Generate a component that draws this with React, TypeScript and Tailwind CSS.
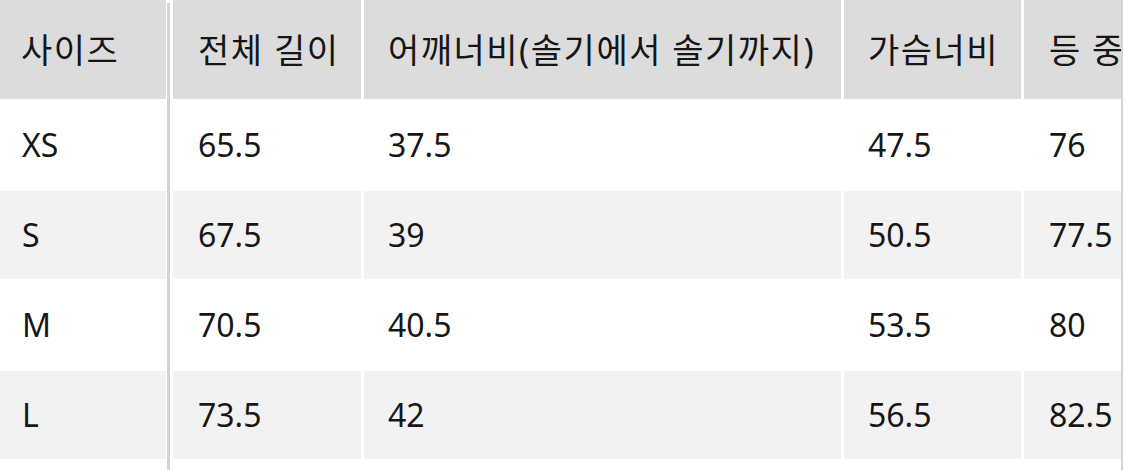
import React from 'react';

const headers = ['사이즈', '전체 길이', '어깨너비(솔기에서 솔기까지)', '가슴너비', '등 중심 소매길이'];

const rows = [
  ['XS', '65.5', '37.5', '47.5', '76'],
  ['S', '67.5', '39', '50.5', '77.5'],
  ['M', '70.5', '40.5', '53.5', '80'],
  ['L', '73.5', '42', '56.5', '82.5'],
];

// widths of the scrolling columns (the last one runs past the edge)
const colWidths = ['w-[188px]', 'w-[477px]', 'w-[177px]', 'w-[260px]'];
const colPads = ['pl-[25px]', 'pl-[24px]', 'pl-[24px]', 'pl-[25px]'];

const rowBg = (i: number) => (i % 2 === 0 ? 'bg-white' : 'bg-[#f2f2f2]');

export default function App() {
  return (
    <div
      className="w-[1125px] h-[470px] bg-white overflow-hidden text-[32px] text-[#161616] leading-none"
      style={{ fontFamily: '"Noto Sans", "Noto Sans CJK KR", sans-serif' }}
    >
      <div className="flex h-full">
        {/* Sticky size column */}
        <div className="w-[166px] shrink-0 flex flex-col gap-[2px]">
          <div className="h-[99px] bg-[#dcdcdc] flex items-center pl-[21px] text-[34px] tracking-[1.5px]">
            {headers[0]}
          </div>
          {rows.map((r, i) => (
            <div key={r[0]} className={`h-[88px] flex items-center pl-[22px] ${rowBg(i)}`}>
              {r[0]}
            </div>
          ))}
        </div>

        {/* divider line */}
        <div className="w-[3px] shrink-0 ml-px mt-[3px] bg-[#d4d4d4]" />

        {/* Scrolling columns */}
        <div className="ml-[3px] w-[948px] shrink-0 overflow-hidden flex flex-col gap-[2px]">
          <div className="flex gap-[3px] h-[99px] shrink-0">
            {headers.slice(1).map((h, c) => (
              <div
                key={h}
                className={`${colWidths[c]} ${colPads[c]} shrink-0 bg-[#dcdcdc] flex items-center whitespace-nowrap text-[34px] tracking-[1.5px]`}
              >
                {h}
              </div>
            ))}
          </div>
          {rows.map((r, i) => (
            <div key={r[0]} className="flex gap-[3px] h-[88px] shrink-0">
              {r.slice(1).map((v, c) => (
                <div
                  key={c}
                  className={`${colWidths[c]} ${colPads[c]} shrink-0 flex items-center whitespace-nowrap ${rowBg(i)}`}
                >
                  {v}
                </div>
              ))}
            </div>
          ))}
        </div>

        {/* right edge line */}
        <div className="w-[2px] shrink-0 bg-[#d4d4d4]" />
      </div>
    </div>
  );
}
